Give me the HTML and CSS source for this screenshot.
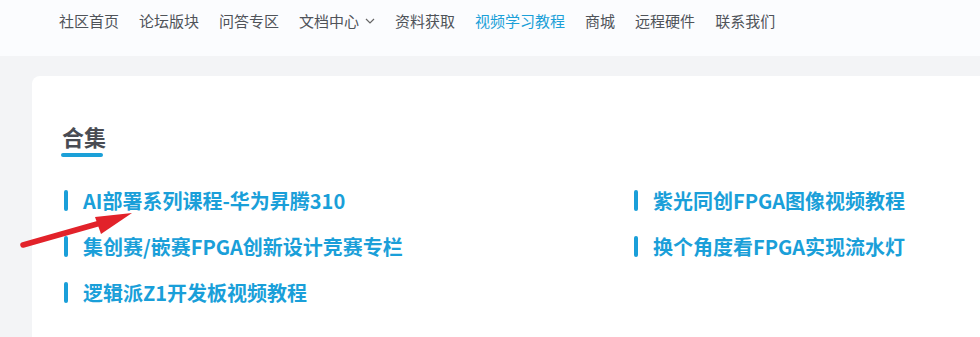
FILE: index.html
```html
<!DOCTYPE html>
<html lang="zh-CN">
<head>
<meta charset="utf-8">
<title>合集</title>
<link rel="stylesheet" href="styles.css">
</head>
<body>
<header class="header">
  <nav class="nav">
    <a class="nav-item">社区首页</a>
    <a class="nav-item">论坛版块</a>
    <a class="nav-item">问答专区</a>
    <a class="nav-item has-sub">文档中心<svg class="chev" width="10" height="6" viewBox="0 0 10 6"><path d="M1 1 L5 5 L9 1" fill="none" stroke="#666" stroke-width="1.2"/></svg></a>
    <a class="nav-item">资料获取</a>
    <a class="nav-item active">视频学习教程</a>
    <a class="nav-item">商城</a>
    <a class="nav-item">远程硬件</a>
    <a class="nav-item">联系我们</a>
  </nav>
</header>
<main class="page">
  <section class="card">
    <h2 class="title">合集</h2>
    <ul class="list">
      <li class="item">AI部署系列课程-华为昇腾310</li>
      <li class="item">紫光同创FPGA图像视频教程</li>
      <li class="item">集创赛/嵌赛FPGA创新设计竞赛专栏</li>
      <li class="item">换个角度看FPGA实现流水灯</li>
      <li class="item">逻辑派Z1开发板视频教程</li>
    </ul>
  </section>
</main>
<svg class="arrow" width="980" height="337" viewBox="0 0 980 337">
  <line x1="23" y1="245" x2="104" y2="222" stroke="#e2222a" stroke-width="5.5" stroke-linecap="round"/>
  <polygon points="132,213 95,217 101,234" fill="#e2222a"/>
</svg>
</body>
</html>
```
FILE: styles.css
```css
html, body {
  margin: 0;
  padding: 0;
  overflow: hidden;
}
body {
  background: #f3f4f6;
  font-family: "Microsoft YaHei", "Noto Sans CJK SC", "Noto Sans", sans-serif;
  position: relative;
  width: 980px;
  height: 337px;
}
.header {
  background: #fbfcfe;
  height: 56px;
  box-sizing: border-box;
}
.nav {
  display: flex;
  align-items: center;
  height: 42px;
  padding-left: 59px;
  gap: 20px;
}
.nav-item {
  font-size: 15px;
  color: #4f5359;
  line-height: 42px;
  white-space: nowrap;
  display: flex;
  align-items: center;
}
.nav-item.active {
  color: #1ba0d8;
}
.chev {
  margin-left: 6px;
}
.page {
  margin: 20px 0 0 32px;
}
.card {
  background: #ffffff;
  border-radius: 8px 0 0 0;
  padding: 45px 0 22px 30px;
}
.title {
  margin: 0;
  font-size: 22px;
  font-weight: 700;
  line-height: 30px;
  color: #494c53;
  display: flex;
  flex-direction: column;
}
.title::after {
  content: "";
  display: block;
  width: 42px;
  height: 4px;
  margin-top: 2px;
  margin-left: -1px;
  border-radius: 2px;
  background: #1ba0d8;
}
.list {
  list-style: none;
  margin: 20px 0 0;
  padding: 0;
  display: grid;
  grid-template-columns: 570px 1fr;
}
.item {
  display: flex;
  align-items: center;
  gap: 15px;
  height: 46px;
  padding-left: 2px;
  font-size: 20px;
  font-weight: 700;
  color: #1a9fd9;
  white-space: nowrap;
}
.item::before {
  content: "";
  width: 4px;
  height: 21px;
  border-radius: 2px;
  background: #1a9fd9;
  flex: none;
}
.arrow {
  position: absolute;
  left: 0;
  top: 0;
  pointer-events: none;
}
```
